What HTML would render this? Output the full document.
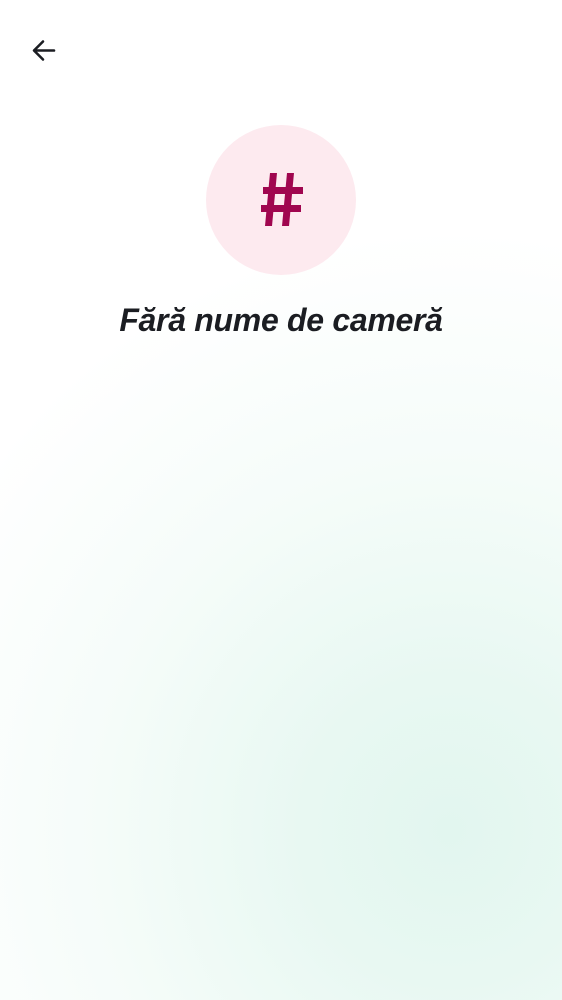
<!DOCTYPE html>
<html><head><meta charset="utf-8"><style>
html,body{margin:0;padding:0}
body{width:562px;height:1000px;overflow:hidden;position:relative;font-family:"Liberation Sans",sans-serif;
background:radial-gradient(ellipse 580px 600px at 450px 830px,#e2f6ef 0%,#e8f8f2 25%,#f5fcf9 60%,#ffffff 100%);}
.circle{position:absolute;left:206px;top:125px;width:150px;height:150px;border-radius:50%;background:#fdeaef;}
.hash{position:absolute;left:0;top:0;width:150px;height:150px;}
.title{position:absolute;left:0;width:562px;top:302px;text-align:center;font-size:32px;font-weight:bold;font-style:italic;color:#1b1d22;letter-spacing:-0.3px}
</style></head><body>
<svg style="position:absolute;left:29px;top:37px" width="28" height="28" viewBox="0 0 28 28"><path d="M25 13.5H6M14 4.5L5 13.5L14 22.5" fill="none" stroke="#1b1d22" stroke-width="2.6" stroke-linecap="round" stroke-linejoin="round"/></svg>
<div class="circle"><svg class="hash" viewBox="0 0 150 150">
<g fill="#a0064f">
<polygon points="64,48 71,48 66,101 59,101"/>
<polygon points="81,48 88,48 83,101 76,101"/>
<rect x="57" y="62" width="40" height="7"/>
<rect x="55" y="80" width="40" height="7"/>
</g></svg></div>
<div class="title">Fără nume de cameră</div>
</body></html>
